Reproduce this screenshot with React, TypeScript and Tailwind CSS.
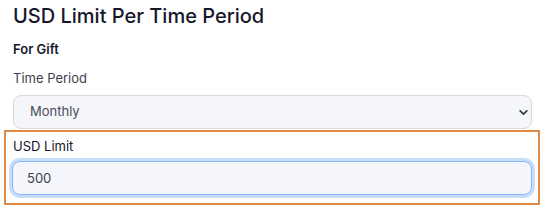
export default function App() {
  return (
    <div className="h-[208px] w-[545px] overflow-hidden bg-white font-['Inter','Liberation_Sans',sans-serif] text-[#212529]">
      <h2 className="ml-[13px] mt-[3px] text-[20px] font-medium leading-[26px] text-[#17172b]">
        USD Limit Per Time Period
      </h2>
      <h3 className="ml-[13px] mt-[11px] text-[13px] font-semibold leading-[18px] text-[#17172b]">
        For Gift
      </h3>
      <label className="ml-[13px] mt-[11px] block text-[13px] leading-[18px] text-[#3d3f4a]">
        Time Period
      </label>
      <div className="relative ml-[13px] mr-[13px] mt-[8px]">
        <select
          defaultValue="monthly"
          className="h-[34px] w-full appearance-none rounded-[8px] border border-[#d7d9e0] bg-[#f5f6fa] pl-[16px] text-[13px] text-[#4a4d58] outline-none"
        >
          <option value="monthly">Monthly</option>
        </select>
        <svg
          viewBox="0 0 10 6"
          className="pointer-events-none absolute right-[4px] top-[15px] h-[5px] w-[9px]"
        >
          <path
            d="M1 1l4 4 4-4"
            fill="none"
            stroke="#343a40"
            strokeWidth="2"
            strokeLinecap="round"
            strokeLinejoin="round"
          />
        </svg>
      </div>
      <div className="ml-[4px] mr-[5px] mt-px border-2 border-[#e08a46] px-[6px] pb-[8px] pt-[5px]">
        <label className="ml-[1px] block text-[13px] leading-[18px] text-[#17172b]">
          USD Limit
        </label>
        <input
          defaultValue="500"
          className="mt-[6px] h-[34px] w-full rounded-[8px] border border-[#86b7f5] bg-[#f4f6fb] px-[14px] text-[13px] text-[#3d3f4a] shadow-[0_0_0_3px_#c7defb] outline-none"
        />
      </div>
    </div>
  );
}
